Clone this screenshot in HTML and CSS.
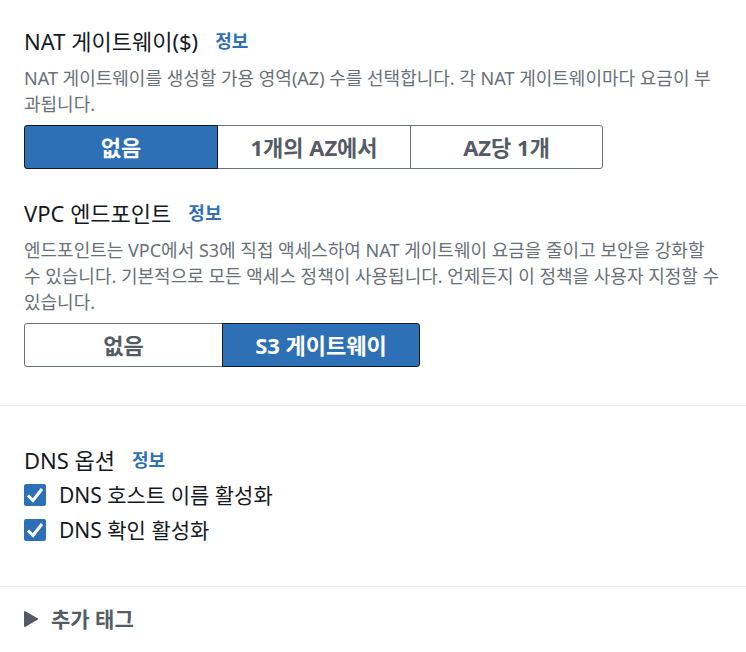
FILE: index.html
```html
<!DOCTYPE html>
<html lang="ko">
<head>
<meta charset="utf-8">
<meta name="viewport" content="width=device-width, initial-scale=1">
<title>VPC 설정</title>
<link rel="stylesheet" href="styles.css">
</head>
<body>
<main class="form">
  <section class="group">
    <div class="field">
      <div class="heading"><h2 id="nat">NAT 게이트웨이($)</h2><a class="info" href="#nat">정보</a></div>
      <p class="description">NAT 게이트웨이를 생성할 가용 영역(AZ) 수를 선택합니다. 각 NAT 게이트웨이마다 요금이 부과됩니다.</p>
      <div class="segments segments-three" role="group" aria-labelledby="nat">
        <button class="segment selected" type="button" aria-pressed="true">없음</button>
        <button class="segment" type="button" aria-pressed="false">1개의 AZ에서</button>
        <button class="segment" type="button" aria-pressed="false">AZ당 1개</button>
      </div>
    </div>
    <div class="field">
      <div class="heading"><h2 id="vpc">VPC 엔드포인트</h2><a class="info" href="#vpc">정보</a></div>
      <p class="description">엔드포인트는 VPC에서 S3에 직접 액세스하여 NAT 게이트웨이 요금을 줄이고 보안을 강화할 수 있습니다. 기본적으로 모든 액세스 정책이 사용됩니다. 언제든지 이 정책을 사용자 지정할 수 있습니다.</p>
      <div class="segments segments-two" role="group" aria-labelledby="vpc">
        <button class="segment" type="button" aria-pressed="false">없음</button>
        <button class="segment selected" type="button" aria-pressed="true">S3 게이트웨이</button>
      </div>
    </div>
  </section>
  <section class="group dns">
    <div class="heading"><h2 id="dns">DNS 옵션</h2><a class="info" href="#dns">정보</a></div>
    <label class="option"><input type="checkbox" checked><span>DNS 호스트 이름 활성화</span></label>
    <label class="option"><input type="checkbox" checked><span>DNS 확인 활성화</span></label>
  </section>
  <section class="group tags">
    <button class="expander" type="button" aria-expanded="false">
      <svg class="caret" viewBox="0 0 14 16" aria-hidden="true"><path d="M1 1 13 8 1 15Z"/></svg>
      <span>추가 태그</span>
    </button>
  </section>
</main>
</body>
</html>
```
FILE: styles.css
```css
* { box-sizing: border-box; }
body {
  margin: 0;
  background: #fff;
  color: #16191f;
  font-family: "Noto Sans", "Noto Sans CJK KR", sans-serif;
  font-size: 21px;
  line-height: 32px;
}
h2, p { margin: 0; }
.group { padding: 25px 24px 38px; }
.group + .group { border-top: 1px solid #eaeded; }
.field + .field { margin-top: 28px; }
.heading { display: flex; align-items: center; gap: 17px; }
h2 { font-size: 22px; font-weight: 400; line-height: 32px; }
.info { color: #2f70b5; font-size: 18px; font-weight: 700; text-decoration: none; }
.description {
  margin: 8px 0;
  color: #687078;
  font-size: 18px;
  line-height: 26px;
}
.segments { display: grid; width: fit-content; }
.segments-three { grid-template-columns: repeat(3, 193px); }
.segments-two { grid-template-columns: repeat(2, 198px); }
.segment {
  height: 44px;
  margin: 0 -1px 0 0;
  padding: 0;
  border: 1px solid #687078;
  background: #fff;
  color: #545b64;
  font: inherit;
  font-size: 22px;
  font-weight: 700;
}
.segment:first-child { border-radius: 3px 0 0 3px; }
.segment:last-child { margin-right: 0; border-radius: 0 3px 3px 0; }
.segment.selected { z-index: 1; background: #2e70b6; border-color: #16191f; color: #fff; }
.group.dns { padding-top: 38px; padding-bottom: 40px; }
.option { display: flex; align-items: center; gap: 13px; margin-top: 3px; }
.option input {
  appearance: none;
  width: 22px;
  height: 22px;
  margin: 0;
  border-radius: 2px;
  background: #2e70b6 url("data:image/svg+xml,%3Csvg xmlns='http://www.w3.org/2000/svg' viewBox='0 0 22 22'%3E%3Cpath d='M4 11.5l5 5L18 5' fill='none' stroke='white' stroke-width='3'/%3E%3C/svg%3E") center / 22px 22px;
}
.group.tags { padding-top: 16px; padding-bottom: 16px; }
.expander {
  display: flex;
  align-items: center;
  gap: 13px;
  padding: 0;
  border: 0;
  background: none;
  color: #545b64;
  font: inherit;
  font-weight: 700;
}
.caret { width: 14px; height: 16px; fill: #545b64; stroke: #545b64; stroke-width: 2; stroke-linejoin: round; }
```
